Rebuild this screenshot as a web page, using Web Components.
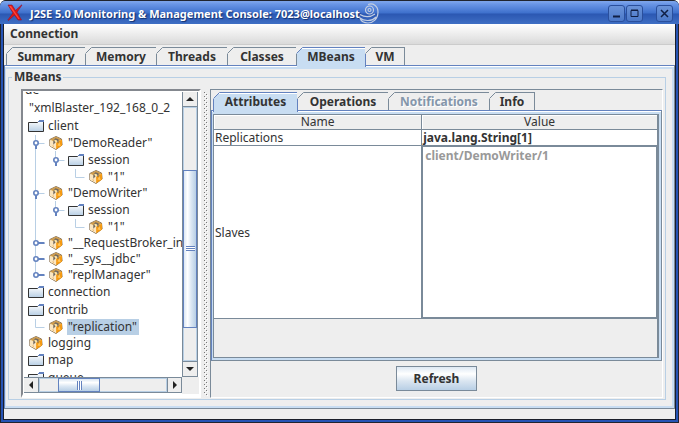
<!DOCTYPE html>
<html lang="en">
<head>
<meta charset="utf-8">
<title>J2SE 5.0 Monitoring &amp; Management Console</title>
<style>
html,body{margin:0;height:100%;background:#fff}
body{
  --line:#7a8a99;--blue:#6382bf;--pale:#b8cfe5;--sel:#c8ddf2;--face:#eee;
  --thumb:#dbe7f3,#fff 30%,#dbe7f3 60%,#b8cfe5;
  font:12px/16px "Noto Sans","Open Sans",sans-serif;color:#333;
}
</style>
</head>
<body>
<console-window></console-window>
<script>
const define = (name, html, setup) => customElements.define(name, class extends HTMLElement {
  connectedCallback() {
    if (this.shadowRoot) return;
    const t = document.createElement('template');
    t.innerHTML = '<style>*{box-sizing:border-box}:host{display:block;box-sizing:border-box}</style>' + html;
    this.attachShadow({mode: 'open'}).append(t.content.cloneNode(true));
    if (setup) setup(this, this.shadowRoot);
  }
});

/* Title bar */
define('title-bar', `
<style>
:host{display:flex;align-items:center;flex:none;height:24px;padding:0 6px 0 7px;border-top:1px solid #20242e;border-radius:5px 5px 0 0;
 background:linear-gradient(#7ba3ea 0,#7ba3ea 1px,#6a96e6 3px,#3e70cc 12px,#2b57b2 13px,#3f6fc4 100%);color:#fff}
h1{margin:0 0 0 7px;font-size:11px;line-height:22px;font-weight:bold;text-shadow:1px 1px 1px #12306e;white-space:nowrap;padding-top:2px}
.x{width:16px;height:18px}
.swirl{width:21px;height:22px;margin-left:-1px}
.sp{flex:1}
button{width:17px;height:17px;padding:0;margin:2px 0 0 1px;border:1px solid #2a4f9c;border-radius:3px;background:linear-gradient(#6a93d9,#4b78c9);display:block}
button:last-child{margin-left:13px}
button svg{display:block}
</style>
<svg class="x" viewBox="0 0 16 18"><path d="M1 1l4 0 3.500 5.500L14.500 1l.5 0-5 7.200L14.500 16l-3.500 0-3.500-5L1.500 16.500l-.7-.5L6 9z" fill="#e01818" stroke="#8d1030" stroke-width=".6"/><path d="M2 2h2l8.500 13h-1z" fill="#ff4a3c"/></svg>
<h1><slot></slot></h1>
<svg class="swirl" viewBox="0 0 21 22" fill="none" stroke="#c3cee2" stroke-width="1.200"><path d="M9 2.500c5-2 10 1.500 10 7.500 0 7-5 11-10 11-4 0-7-2-8-5 4 3.500 12 3.500 16-1M1 12.500c5 3 10 3 15-.5"/><circle cx="10.500" cy="8" r="4"/><circle cx="10.500" cy="8" r="1.500"/></svg>
<span class="sp"></span>
<button aria-label="Minimize"><svg width="15" height="15"><path d="M4 10.500h7" stroke="#101f45" stroke-width="2"/></svg></button>
<button aria-label="Maximize"><svg width="15" height="15"><path d="M4 4.500h7v6H4zM4 4h7" stroke="#101f45" fill="none"/></svg></button>
<button aria-label="Close"><svg width="15" height="15"><path d="M4 4l7 7M11 4l-7 7" stroke="#101f45" stroke-width="1.500"/></svg></button>`);

/* One tab; the chamfered corner is drawn over its top left */
define('tab-button', `
<style>
:host{flex:none;width:var(--w)}
button{position:relative;display:block;width:100%;height:18px;margin:0;padding:0;border:0;border-top:1px solid var(--line);border-right:1px solid var(--line);background:none;font:bold 12px/17px "Noto Sans",sans-serif;color:#333;text-align:center}
:host([selected]) button{height:20px;padding-bottom:2px;background:var(--sel);border-color:var(--blue);box-shadow:inset 0 1px #fff}
:host([first]) button{border-left:1px solid var(--line)}
:host([first][selected]) button{border-left-color:var(--blue)}
button:disabled{color:#8496aa;text-shadow:1px 1px #fff}
svg{position:absolute;left:-1px;top:-1px;color:var(--line)}
:host([selected]) svg{color:var(--blue)}
</style>
<button role="tab"><svg width="7" height="7"><path d="M0 0H7L1 6V7H0z" fill="#eee"/><path d="M.5 6.500l6-6" stroke="currentColor"/></svg><slot></slot></button>`,
(h, r) => {
  const b = r.querySelector('button');
  b.disabled = h.hasAttribute('disabled');
  b.setAttribute('aria-selected', h.hasAttribute('selected'));
});

/* Tab strip with its content panel */
define('tab-pane', `
<style>
:host{display:flex;flex-direction:column;min-height:0}
.tabs{display:flex;height:18px;padding-left:2px;position:relative;z-index:1}
.panel{flex:1;min-height:0;display:flex;flex-direction:column;border:1px solid var(--line);border-top-color:var(--blue);border-left-color:var(--blue);padding:1px 0 0;background:#fff}
.in{flex:1;min-height:0;display:flex;flex-direction:column;border:2px solid var(--sel);border-left-width:1px;background:var(--face)}
</style>
<div class="tabs" role="tablist"><slot name="tab"></slot></div>
<div class="panel"><div class="in"><slot></slot></div></div>`);

/* Titled group */
define('group-box', `
<style>
:host{display:flex;flex-direction:column;flex:1;min-height:0;position:relative}
.box{flex:1;min-height:0;display:flex;margin-top:8px;border:1px solid var(--pale);padding:11px 2px 1px 12px}
h2{position:absolute;left:4px;top:0;margin:0;padding:0 2px;background:var(--face);font-size:12px;line-height:16px}
</style>
<h2><slot name="title"></slot></h2><div class="box"><slot></slot></div>`);

/* Tree node icons and rows */
const BEAN = `<svg width="14" height="14" viewBox="0 0 14 14"><path d="M7 .5l5.500 2.500.6 6L7 13.500.9 10 .8 3.500z" fill="#f8dfae" stroke="#7d6648" stroke-width=".9"/><path d="M7.200 6.500L13 3.500l.1 6L7.200 13.200z" fill="#f59a12"/><path d="M1 4l6 3v6L1 10z" fill="#fbe6c0"/><path d="M7 .8l5.600 2.600L7 6.400 1.200 3.600z" fill="#cf9c4c"/><path d="M4.300 8.800V5.200l2-2.900 3.200 1v4.200l-2-2.200z" fill="#6f6860"/><path d="M5 4.600l2-.8 1.600 1.400L7 7z" fill="#ffe2a0"/><path d="M8.400 9.400l2-3.400 1.400 4.200z" fill="#ffc45a"/><path d="M3 9l2 .8v2z" fill="#e8b877"/></svg>`;
const FOLDER = `<svg width="16" height="16"><defs><linearGradient id="f" x2="0" y2="1"><stop stop-color="#fff"/><stop offset="1" stop-color="#b8cfe5"/></linearGradient></defs><path d="M.5 4.500h9l2-2h4v11H.5z" fill="url(#f)" stroke="#333"/><path d="M10 4l2-2h4v1h-3l-1 1z" fill="#6382bf"/><path d="M10 3.500h6M11 2.500h5" stroke="#6382bf"/></svg>`;
define('tree-row', `
<style>
:host{display:flex;align-items:center;height:16px;white-space:nowrap;padding-left:4px}
:host([icon=folder]),:host([tall]){height:18px}
:host([flush]){padding-left:0}
.g{align-self:stretch;flex:none;display:block}
.i{flex:none;width:16px;display:flex;align-items:center;justify-content:center;margin-right:3px}
.t{padding:0 2px 0 1px;line-height:16px}
:host([selected]) .t{background:var(--pale)}
</style><svg class="g"></svg><span class="i"></span><span class="t"><slot></slot></span>`,
(h, r) => {
  const lvl = +h.getAttribute('level') || 0, icon = h.getAttribute('icon');
  const H = icon === 'folder' ? 18 : 16, m = H / 2, x = (lvl - 1) * 20 + 7.5;
  const g = r.querySelector('.g'), i = r.querySelector('.i');
  h.setAttribute('role', 'treeitem');
  g.setAttribute('width', lvl * 20); g.setAttribute('height', H);
  if (!lvl) g.style.display = 'none';
  let s = '';
  if (h.hasAttribute('through')) s += `<path d="M7.5 0V${H}" stroke="#b8cfe5"/>`;
  if (lvl) {
    s += `<path d="M${x} 0V${h.hasAttribute('last') ? m + .5 : H}M${x} ${m + .5}h9" stroke="#b8cfe5" fill="none"/>`;
    const n = h.getAttribute('node');
    if (n) s += n === 'open'
      ? `<path d="M${x + .5} ${m}v6" stroke="#6382bf" stroke-width="2"/>`
      : `<path d="M${x} ${m}h9" stroke="#6382bf" stroke-width="2"/>`;
    if (n) s += `<circle cx="${x + .5}" cy="${m}" r="2.2" fill="#fff" stroke="#6382bf" stroke-width="1.6"/>`;
  }
  g.innerHTML = s;
  i.innerHTML = icon === 'folder' ? FOLDER : icon === 'bean' ? BEAN : '';
  if (!icon) i.style.display = 'none';
});

/* Scroll bar, vertical unless marked horizontal */
define('scroll-bar', `
<style>
:host{display:flex;flex-direction:column;width:16px;border-left:1px solid var(--line);border-right:1px solid var(--line);background:var(--face)}
:host([horizontal]){flex-direction:row;width:auto;height:16px;border:0;border-top:1px solid var(--line);border-bottom:1px solid var(--line)}
button{flex:none;width:14px;height:15px;padding:0;border:0;border-bottom:1px solid var(--line);background:var(--face);display:grid;place-items:center}
button:last-child{border-top:1px solid var(--line);height:16px}
:host([horizontal]) button{width:15px;height:14px;border:0;border-right:1px solid var(--line)}
:host([horizontal]) button:last-child{border-left:1px solid var(--line)}
.track{flex:1;display:flex;flex-direction:inherit;border:1px solid var(--pale)}
.a{flex:var(--before)}.z{flex:var(--after)}
.th{flex:var(--size);margin:-1px;border:1px solid var(--blue);background:linear-gradient(90deg,var(--thumb));display:grid;place-items:center}
:host([horizontal]) .th{background:linear-gradient(var(--thumb))}
.grip{width:9px;height:5px;background:repeating-linear-gradient(var(--blue) 0 1px,#fff 1px 2px)}
:host([horizontal]) .grip{width:5px;height:9px;background:repeating-linear-gradient(90deg,var(--blue) 0 1px,#fff 1px 2px)}
</style>
<button aria-label="Back"><svg width="8" height="8"></svg></button>
<div class="track"><div class="a"></div><div class="th"><div class="grip"></div></div><div class="z"></div></div>
<button aria-label="Forward"><svg width="8" height="8"></svg></button>`,
(h, r) => {
  const d = h.hasAttribute('horizontal') ? ['M6 0v8L2 4z', 'M2 0v8l4-4z'] : ['M0 6h8L4 2z', 'M0 2h8L4 6z'];
  r.querySelectorAll('button svg').forEach((s, i) => s.innerHTML = `<path d="${d[i]}" fill="#222"/>`);
});

/* MBean tree in its scroll pane */
define('bean-tree', `
<style>
:host{flex:none;width:180px;display:grid;grid-template:minmax(0,1fr) 17px/minmax(0,1fr) 17px;border:solid #fff;border-width:2px 2px 4px;border-top-color:#84888f;border-left-color:#84888f;background:#fff;padding:1px 0 0 1px}
.view{overflow:hidden;min-height:0}
.rows{margin-top:-11px}
scroll-bar{--before:63;--size:157;--after:33}
scroll-bar[horizontal]{--before:19;--size:39;--after:65}
.corner{background:var(--face)}
</style>
<div class="view"><div class="rows" role="tree">
<tree-row tall flush>de</tree-row>
<tree-row tall>"xmlBlaster_192_168_0_2</tree-row>
<tree-row icon="folder">client</tree-row>
<tree-row icon="bean" level="1" node="open">"DemoReader"</tree-row>
<tree-row icon="folder" level="2" node="open" through last>session</tree-row>
<tree-row icon="bean" level="3" through last>"1"</tree-row>
<tree-row icon="bean" level="1" node="open">"DemoWriter"</tree-row>
<tree-row icon="folder" level="2" node="open" through last>session</tree-row>
<tree-row icon="bean" level="3" through last>"1"</tree-row>
<tree-row icon="bean" level="1" node="closed">"__RequestBroker_internal"</tree-row>
<tree-row icon="bean" level="1" node="closed">"__sys__jdbc"</tree-row>
<tree-row icon="bean" level="1" node="closed" last>"replManager"</tree-row>
<tree-row icon="folder">connection</tree-row>
<tree-row icon="folder">contrib</tree-row>
<tree-row icon="bean" level="1" last selected>"replication"</tree-row>
<tree-row icon="bean">logging</tree-row>
<tree-row icon="folder">map</tree-row>
<tree-row icon="folder">queue</tree-row>
</div></div>
<scroll-bar></scroll-bar><scroll-bar horizontal></scroll-bar><div class="corner"></div>`);

/* Attribute table */
define('attribute-table', `
<style>
:host{flex:1;min-height:0;border:1px solid var(--line);border-right-width:2px}
table{width:100%;border-collapse:separate;border-spacing:0;table-layout:fixed;background:#fff}
th,td{padding:0 1px;border-bottom:1px solid var(--line);height:16px;line-height:15px;text-align:left;font-weight:normal}
th{background:var(--face);text-align:center;height:15px;line-height:14px;box-shadow:inset 1px 1px #fff}
th:first-child,td:first-child{width:47%;border-right:1px solid var(--line)}
.v{font-weight:bold}
.big td{height:173px}
.big td:last-child{padding:0}
textarea{display:block;width:100%;height:172px;margin:0;padding:1px 2px;border:1px solid var(--line);border-radius:0;box-shadow:inset -1px -1px #fff;resize:none;background:#fff;font:bold 12px/16px "Noto Sans",sans-serif;color:#999;overflow:hidden}
</style>
<table><thead><tr><th scope="col">Name</th><th scope="col">Value</th></tr></thead>
<tbody><tr><td>Replications</td><td class="v">java.lang.String[1]</td></tr>
<tr class="big"><td id="s">Slaves</td><td><textarea disabled aria-labelledby="s">client/DemoWriter/1</textarea></td></tr></tbody></table>`);

/* Dotted divider between the two panes */
define('split-grip', `
<style>:host{flex:none;width:9px;padding:3px 2px 2px 3px}
svg{display:block;width:4px;height:100%}</style>
<svg><defs><pattern id="p" width="4" height="4" patternUnits="userSpaceOnUse"><path d="M0 0h1v1H0zM2 2h1v1H2z" fill="#777"/><path d="M1 1h1v1H1zM3 3h1v1H3z" fill="#fff"/></pattern></defs><rect width="4" height="100%" fill="url(#p)"/></svg>`);

define('console-window', `
<style>
:host{display:flex;flex-direction:column;height:100vh;min-height:300px;background:#20242e;border-radius:6px 6px 0 0;overflow:hidden}
.frame{flex:1;min-height:0;display:flex;flex-direction:column;border:1px solid #20242e;border-top:0;background:#2553b4;padding:0 2px 2px}
.body{flex:1;min-height:0;display:flex;flex-direction:column;border:1px solid #1b1f2a;border-top:0;background:var(--face)}
nav{flex:none;height:21px;padding-left:6px;background:linear-gradient(#fff,#dadada);border-bottom:1px solid #ccc}
nav button{border:0;padding:0;background:none;font:bold 12px/19px "Noto Sans",sans-serif;color:#333}
.main{flex:1;margin:2px 0 10px}
.main>tab-button{--w:70px}
.main group-box{margin:0 6px 6px 2px}
.main>.w79{--w:80px}.main>.w71{--w:71px}.main>.w69{--w:69px}.main>.w39{--w:39px}
.right{flex:1;min-width:0;display:flex;flex-direction:column;border:1px solid #fff;border-top-color:var(--line);border-left-color:var(--line);padding-top:2px}
.right tab-pane{flex:1}
.a{--w:85px}.o{--w:91px}.n{--w:101px}.f{--w:45px}
.foot{flex:none;height:36px;display:flex;align-items:flex-start;justify-content:center;padding-top:5px}
.foot button{width:81px;height:25px;border:1px solid var(--line);background:linear-gradient(#dde8f3,#fff 30%,#dbe6f1 60%,#b8cfe5);font:bold 12px/16px "Noto Sans",sans-serif;color:#333;padding:0}
</style>
<title-bar>J2SE 5.0 Monitoring &amp; Management Console: 7023@localhost</title-bar>
<div class="frame"><div class="body">
<nav><button>Connection</button></nav>
<tab-pane class="main">
<tab-button slot="tab" class="w79" first>Summary</tab-button><tab-button slot="tab" class="w71">Memory</tab-button><tab-button slot="tab" class="w71">Threads</tab-button><tab-button slot="tab" class="w69">Classes</tab-button><tab-button slot="tab" class="w69" selected>MBeans</tab-button><tab-button slot="tab" class="w39">VM</tab-button>
<group-box><span slot="title">MBeans</span>
<bean-tree></bean-tree><split-grip></split-grip>
<div class="right">
<tab-pane>
<tab-button slot="tab" class="a" first selected>Attributes</tab-button><tab-button slot="tab" class="o">Operations</tab-button><tab-button slot="tab" class="n" disabled>Notifications</tab-button><tab-button slot="tab" class="f">Info</tab-button>
<attribute-table></attribute-table>
</tab-pane>
<div class="foot"><button>Refresh</button></div>
</div>
</group-box>
</tab-pane>
</div></div>`);
</script>
</body>
</html>
